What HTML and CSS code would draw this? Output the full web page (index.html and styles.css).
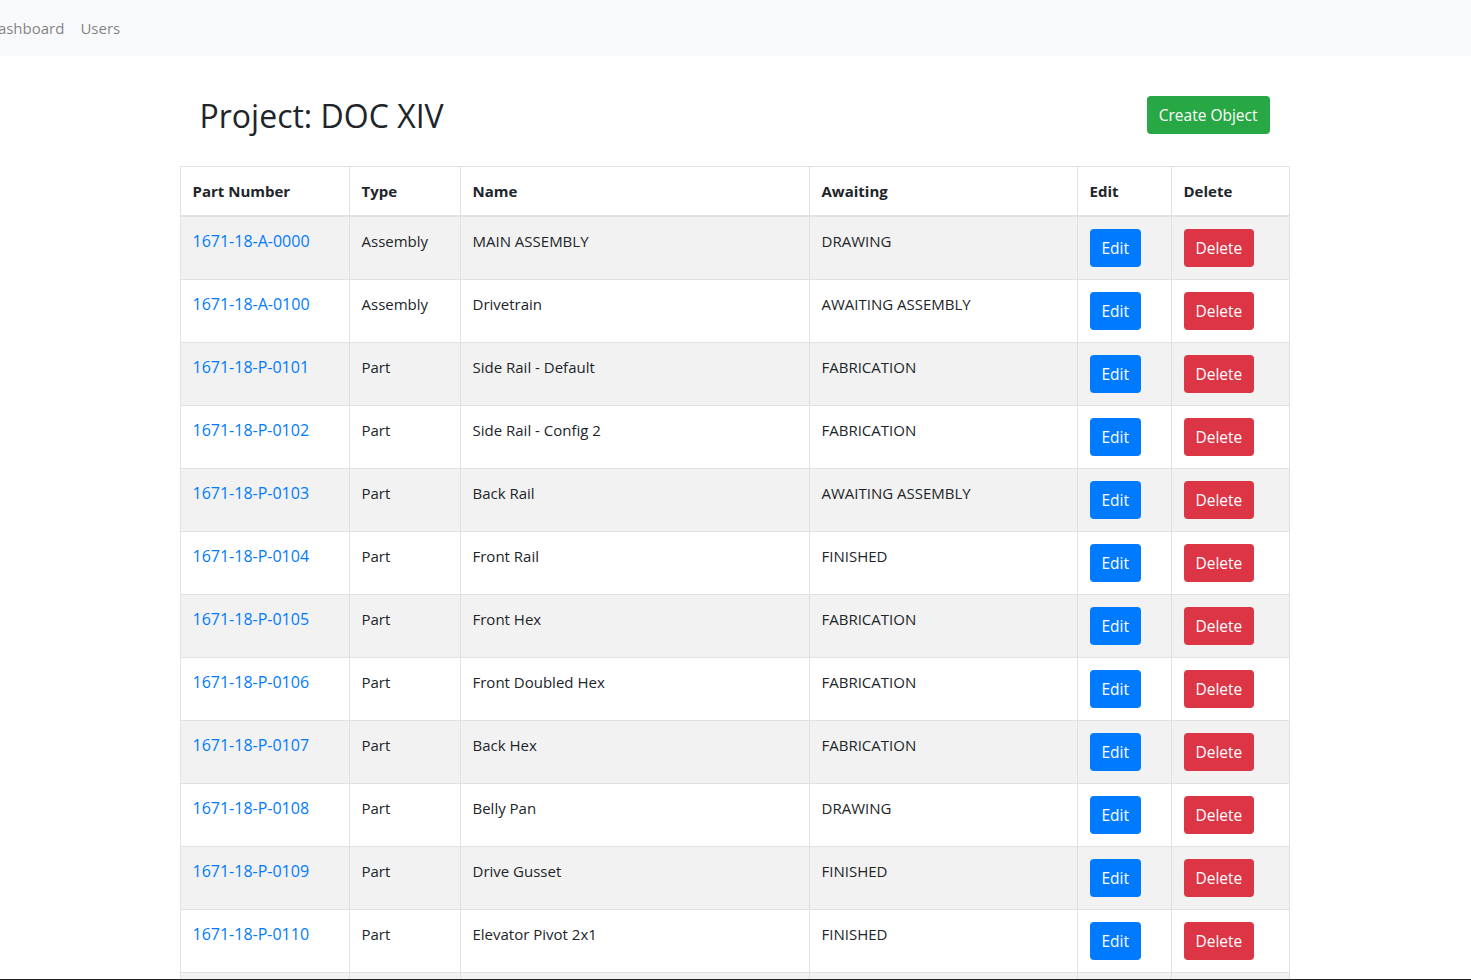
FILE: index.html
```html
<!DOCTYPE html>
<html lang="en">
<head>
<meta charset="utf-8">
<title>Project: DOC XIV</title>
<link rel="stylesheet" href="styles.css">
</head>
<body>
<nav class="navbar">
  <a class="nav-link first" href="#">Dashboard</a>
  <a class="nav-link" href="#">Users</a>
</nav>
<main class="container">
  <div class="page-head">
    <h2 class="title">Project: DOC XIV</h2>
    <a class="btn btn-success" href="#">Create Object</a>
  </div>
  <table class="table">
    <colgroup>
      <col class="c1"><col class="c2"><col class="c3"><col class="c4"><col class="c5"><col class="c6">
    </colgroup>
    <thead>
      <tr><th>Part Number</th><th>Type</th><th>Name</th><th>Awaiting</th><th>Edit</th><th>Delete</th></tr>
    </thead>
    <tbody>
      <tr><td><a href="#">1671-18-A-0000</a></td><td>Assembly</td><td>MAIN ASSEMBLY</td><td>DRAWING</td><td><a class="btn btn-primary" href="#">Edit</a></td><td><a class="btn btn-danger" href="#">Delete</a></td></tr>
      <tr><td><a href="#">1671-18-A-0100</a></td><td>Assembly</td><td>Drivetrain</td><td>AWAITING ASSEMBLY</td><td><a class="btn btn-primary" href="#">Edit</a></td><td><a class="btn btn-danger" href="#">Delete</a></td></tr>
      <tr><td><a href="#">1671-18-P-0101</a></td><td>Part</td><td>Side Rail - Default</td><td>FABRICATION</td><td><a class="btn btn-primary" href="#">Edit</a></td><td><a class="btn btn-danger" href="#">Delete</a></td></tr>
      <tr><td><a href="#">1671-18-P-0102</a></td><td>Part</td><td>Side Rail - Config 2</td><td>FABRICATION</td><td><a class="btn btn-primary" href="#">Edit</a></td><td><a class="btn btn-danger" href="#">Delete</a></td></tr>
      <tr><td><a href="#">1671-18-P-0103</a></td><td>Part</td><td>Back Rail</td><td>AWAITING ASSEMBLY</td><td><a class="btn btn-primary" href="#">Edit</a></td><td><a class="btn btn-danger" href="#">Delete</a></td></tr>
      <tr><td><a href="#">1671-18-P-0104</a></td><td>Part</td><td>Front Rail</td><td>FINISHED</td><td><a class="btn btn-primary" href="#">Edit</a></td><td><a class="btn btn-danger" href="#">Delete</a></td></tr>
      <tr><td><a href="#">1671-18-P-0105</a></td><td>Part</td><td>Front Hex</td><td>FABRICATION</td><td><a class="btn btn-primary" href="#">Edit</a></td><td><a class="btn btn-danger" href="#">Delete</a></td></tr>
      <tr><td><a href="#">1671-18-P-0106</a></td><td>Part</td><td>Front Doubled Hex</td><td>FABRICATION</td><td><a class="btn btn-primary" href="#">Edit</a></td><td><a class="btn btn-danger" href="#">Delete</a></td></tr>
      <tr><td><a href="#">1671-18-P-0107</a></td><td>Part</td><td>Back Hex</td><td>FABRICATION</td><td><a class="btn btn-primary" href="#">Edit</a></td><td><a class="btn btn-danger" href="#">Delete</a></td></tr>
      <tr><td><a href="#">1671-18-P-0108</a></td><td>Part</td><td>Belly Pan</td><td>DRAWING</td><td><a class="btn btn-primary" href="#">Edit</a></td><td><a class="btn btn-danger" href="#">Delete</a></td></tr>
      <tr><td><a href="#">1671-18-P-0109</a></td><td>Part</td><td>Drive Gusset</td><td>FINISHED</td><td><a class="btn btn-primary" href="#">Edit</a></td><td><a class="btn btn-danger" href="#">Delete</a></td></tr>
      <tr><td><a href="#">1671-18-P-0110</a></td><td>Part</td><td>Elevator Pivot 2x1</td><td>FINISHED</td><td><a class="btn btn-primary" href="#">Edit</a></td><td><a class="btn btn-danger" href="#">Delete</a></td></tr>
      <tr><td><a href="#">1671-18-P-0111</a></td><td>Part</td><td>Elevator Pivot 1x1</td><td>FINISHED</td><td><a class="btn btn-primary" href="#">Edit</a></td><td><a class="btn btn-danger" href="#">Delete</a></td></tr>
    </tbody>
  </table>
</main>
<div class="window-edge"></div>
</body>
</html>
```

FILE: styles.css
```css
html, body {
  margin: 0;
  padding: 0;
}
body {
  font-family: "Open Sans", "Noto Sans", "Liberation Sans", sans-serif;
  font-size: 16px;
  line-height: 1.5;
  color: #212529;
  background: #fff;
}
a {
  color: #007bff;
  text-decoration: none;
}
.navbar {
  height: 56px;
  background: #f8f9fa;
  display: flex;
  align-items: center;
  overflow: hidden;
  padding: 0;
}
.nav-link {
  color: rgba(0, 0, 0, 0.5);
  padding: 8px 8px;
  font-size: 15px;
}
.nav-link.first {
  margin-left: -21px;
}
.container {
  width: 1110px;
  margin: 0 auto;
  padding: 40px 16px 0 14px;
}
.page-head {
  display: flex;
  justify-content: space-between;
  align-items: center;
  padding: 0 20px;
  height: 38px;
  margin-bottom: 32px;
}
.title {
  margin: 0;
  font-size: 32px;
  font-weight: 500;
  line-height: 1.2;
  color: #212529;
  position: relative;
  top: 1px;
}
.btn {
  display: inline-block;
  padding: 6px 12px;
  font-size: 15.5px;
  line-height: 26px;
  border-radius: 4px;
  color: #fff;
  white-space: nowrap;
  box-sizing: border-box;
  height: 38px;
}
.btn-success { background: #28a745; }
.btn-primary { background: #007bff; }
.btn-danger { background: #dc3545; }
.table {
  width: 1109px;
  border-collapse: collapse;
  table-layout: fixed;
}
.c1 { width: 169px; }
.c2 { width: 111px; }
.c3 { width: 349px; }
.c4 { width: 268px; }
.c5 { width: 94px; }
.c6 { width: 118px; }
.table th, .table td {
  border: 1px solid #dee2e6;
  padding: 12px;
  text-align: left;
  vertical-align: top;
  font-size: 15px;
  line-height: 24px;
  white-space: nowrap;
}
.table th {
  font-weight: 700;
  border-bottom-width: 2px;
}
.table td {
  height: 38px;
}
.table td a:not(.btn) {
  font-size: 16px;
}
.table tbody tr:nth-child(odd) {
  background: #f2f2f2;
}
.window-edge {
  position: fixed;
  left: 0;
  right: 0;
  bottom: 0;
  height: 1px;
  background: #222;
}
```
